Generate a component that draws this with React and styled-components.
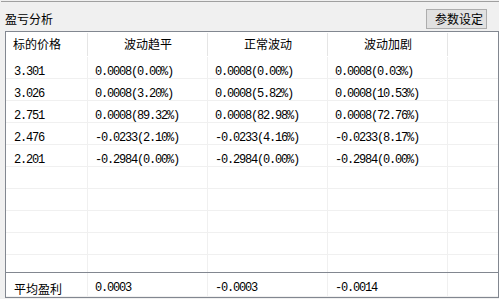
import React from "react";
import styled, { createGlobalStyle } from "styled-components";

const GlobalStyle = createGlobalStyle`
  html, body {
    margin: 0;
    padding: 0;
    background: #f0f0f0;
    overflow: hidden;
  }
  * {
    box-sizing: border-box;
  }
`;

const COLS = "82px 120px 120px 120px 1fr";

const rows = [
  { price: "3.301", flat: "0.0008(0.00%)", normal: "0.0008(0.00%)", sharp: "0.0008(0.03%)" },
  { price: "3.026", flat: "0.0008(3.20%)", normal: "0.0008(5.82%)", sharp: "0.0008(10.53%)" },
  { price: "2.751", flat: "0.0008(89.32%)", normal: "0.0008(82.98%)", sharp: "0.0008(72.76%)" },
  { price: "2.476", flat: "-0.0233(2.10%)", normal: "-0.0233(4.16%)", sharp: "-0.0233(8.17%)" },
  { price: "2.201", flat: "-0.2984(0.00%)", normal: "-0.2984(0.00%)", sharp: "-0.2984(0.00%)" },
  {},
  {},
  {},
  {},
  {},
];

const Page = () => {
  return (
    <>
      <GlobalStyle />
      <Panel>
        <TopBar>
          <Title>盈亏分析</Title>
          <SettingButton>参数设定</SettingButton>
        </TopBar>
        <TableBox>
          <ScrollArea>
            <HeaderRow>
              <HeadCell $align="left">标的价格</HeadCell>
              <HeadCell>波动趋平</HeadCell>
              <HeadCell>正常波动</HeadCell>
              <HeadCell>波动加剧</HeadCell>
              <HeadCell $last />
            </HeaderRow>
            {rows.map((r, i) => (
              <DataRow key={i}>
                <Cell $first>{r.price}</Cell>
                <Cell>{r.flat}</Cell>
                <Cell>{r.normal}</Cell>
                <Cell>{r.sharp}</Cell>
                <Cell $last />
              </DataRow>
            ))}
          </ScrollArea>
          <Footer>
            <FootRow>
              <Cell $first $cjk>平均盈利</Cell>
              <Cell>0.0003</Cell>
              <Cell>-0.0003</Cell>
              <Cell>-0.0014</Cell>
              <Cell $last />
            </FootRow>
          </Footer>
        </TableBox>
      </Panel>
    </>
  );
};

export default Page;

const Panel = styled.div`
  width: 499px;
  height: 299px;
  padding-top: 1px;
`;

const TopBar = styled.div`
  display: flex;
  align-items: flex-start;
  justify-content: space-between;
  height: 30px;
  margin-left: 1px;
  border-top: 1px solid #a0a0a0;
`;

const Title = styled.div`
  padding: 11px 0 0 4px;
  font-family: "Noto Sans CJK SC", sans-serif;
  font-size: 12px;
  line-height: 12px;
  color: #000;
`;

const SettingButton = styled.button`
  display: flex;
  align-items: center;
  width: 61px;
  height: 20px;
  margin: 7px 12px 0 0;
  padding: 0 0 0 8px;
  border: 1px solid #adadad;
  background: #e1e1e1;
  font-family: "Noto Sans CJK SC", sans-serif;
  font-size: 12px;
  line-height: 12px;
  color: #000;
  cursor: pointer;
`;

const TableBox = styled.div`
  margin-left: 5px;
  width: 494px;
  height: 267px;
  border: 1px solid #828790;
  background: #fff;
  display: flex;
  flex-direction: column;
`;

const ScrollArea = styled.div`
  height: 240px;
  overflow: hidden;
`;

const HeaderRow = styled.div`
  display: grid;
  grid-template-columns: ${COLS};
  height: 25px;
`;

const HeadCell = styled.div`
  height: 25px;
  padding: 6px 0 0 ${(p) => (p.$align === "left" ? "7px" : "0")};
  text-align: ${(p) => (p.$align === "left" ? "left" : "center")};
  font-family: "Noto Sans CJK SC", sans-serif;
  font-size: 12px;
  line-height: 12px;
  color: #000;
  background: linear-gradient(#e5e5e5, #e5e5e5) no-repeat right 1px / 1px 23px;
  ${(p) => p.$last && "background: none;"}
`;

const DataRow = styled.div`
  display: grid;
  grid-template-columns: ${COLS};
  height: 22px;
`;

const Cell = styled.div`
  height: 100%;
  padding: 10px 0 0 ${(p) => (p.$first ? "8px" : "7px")};
  border-bottom: 1px solid #f0f0f0;
  border-right: ${(p) => (p.$last ? "none" : "1px solid #f0f0f0")};
  font-family: ${(p) =>
    p.$cjk ? `"Noto Sans CJK SC", sans-serif` : `"Liberation Mono", monospace`};
  font-size: 12px;
  line-height: 11px;
  letter-spacing: ${(p) => (p.$cjk ? "0" : "-1.2px")};
  white-space: nowrap;
  color: #000;
`;

const Footer = styled.div`
  border-top: 1px solid #828790;
  flex: 1;
`;

const FootRow = styled.div`
  display: grid;
  grid-template-columns: ${COLS};
  height: 24px;
`;
